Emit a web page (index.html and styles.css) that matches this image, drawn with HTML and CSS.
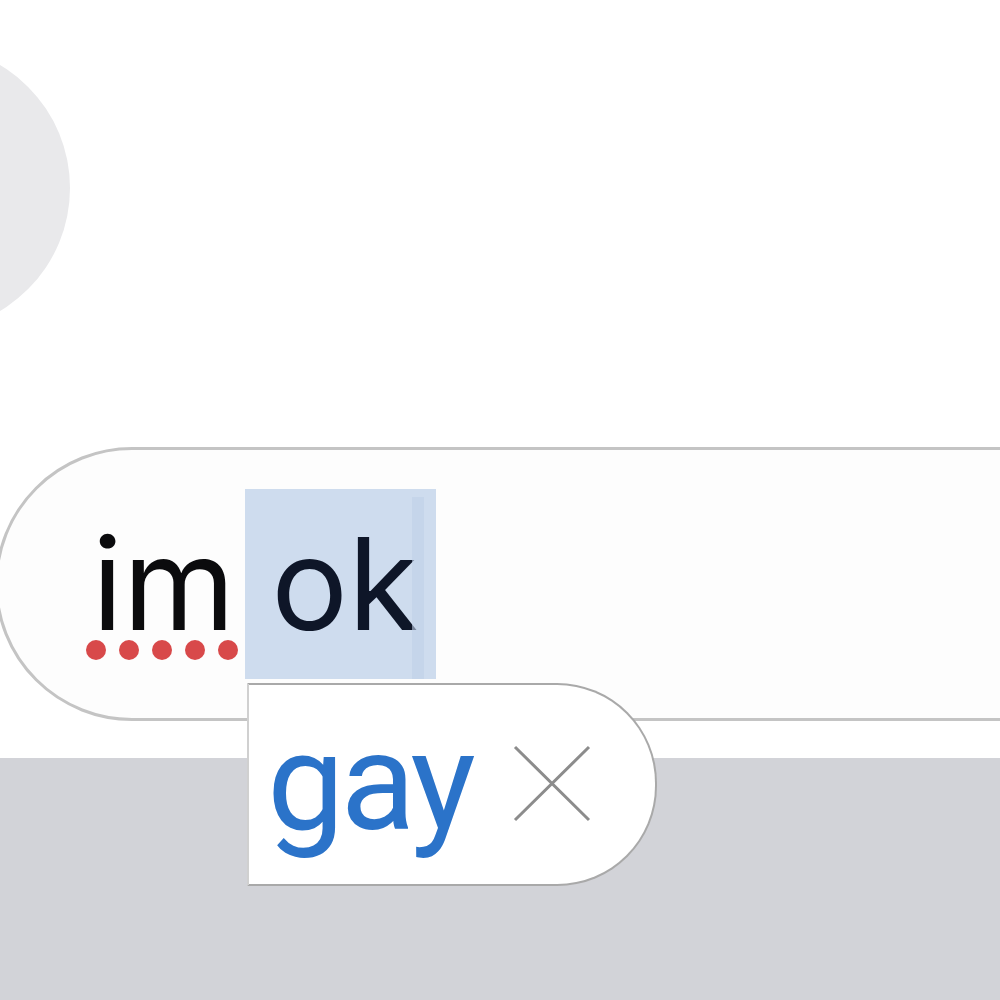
FILE: index.html
```html
<!DOCTYPE html>
<html>
<head>
<meta charset="utf-8">
<link rel="stylesheet" href="styles.css">
</head>
<body>
<div class="screen">
  <div class="chat">
    <div class="avatar"></div>
    <div class="input">
      <span class="word misspelled">im<span class="dots"><i></i><i></i><i></i><i></i><i></i></span></span>
      <span class="word selected">ok</span>
    </div>
  </div>
  <div class="keyboard"></div>
  <div class="suggestion">
    <span class="fix">gay</span>
    <svg class="close" width="80" height="80" viewBox="0 0 80 80"><path d="M3 3 L77 76 M77 3 L3 76" stroke="#8c8c8c" stroke-width="3" fill="none"/></svg>
  </div>
</div>
</body>
</html>
```
FILE: styles.css
```css
html, body { margin: 0; padding: 0; }
body { width: 1000px; height: 1000px; overflow: hidden; background: #fff; }
.screen { position: relative; width: 1000px; height: 1000px; overflow: hidden; display: flex; flex-direction: column; }
.chat { height: 758px; background: #fff; display: flex; flex-direction: column; }
.avatar { width: 286px; height: 286px; border-radius: 50%; background: #e9e9eb; margin-top: 45px; margin-left: -216px; flex: none; }
.input {
  margin-top: 116px; margin-left: -5px; width: 1100px; height: 268px; flex: none;
  border: 3px solid #c4c4c4; border-radius: 140px; background: #fdfdfd;
  display: flex; align-items: center; padding-left: 94px; box-sizing: content-box;
  font-family: Inter, "Noto Sans", sans-serif; font-size: 128px; letter-spacing: 0;
}
.word { display: inline-block; line-height: 190px; height: 190px; }
.misspelled { position: relative; color: #0b0b0d; }
.dots { position: absolute; left: -6px; top: 151px; display: flex; gap: 13px; }
.dots i { display: block; width: 20px; height: 20px; border-radius: 50%; background: #d8494a; }
.selected { position: relative; color: #0e1628; background: #cedcee; margin-left: 10px; padding: 0 18px 0 26px; }
.selected::after { content: ""; position: absolute; right: 12px; top: 8px; width: 12px; height: 182px; background: #bfd0e8; opacity: .6; }
.keyboard { flex: 1; background: #d2d3d8; }
.suggestion {
  position: absolute; left: 247px; top: 683px; width: 410px; height: 203px; box-sizing: border-box;
  background: #fff; border: 2px solid #a9a9a9; border-left-color: #d0d0d0; border-radius: 0 100px 100px 0;
  display: flex; align-items: center; padding-left: 18px; gap: 40px;
}
.fix { font-family: Roboto, "Liberation Sans", sans-serif; font-size: 138px; color: #2b73c9; letter-spacing: -4px; line-height: 1; margin-top: -6px; }
.close { flex: none; margin-top: -2px; }
```
